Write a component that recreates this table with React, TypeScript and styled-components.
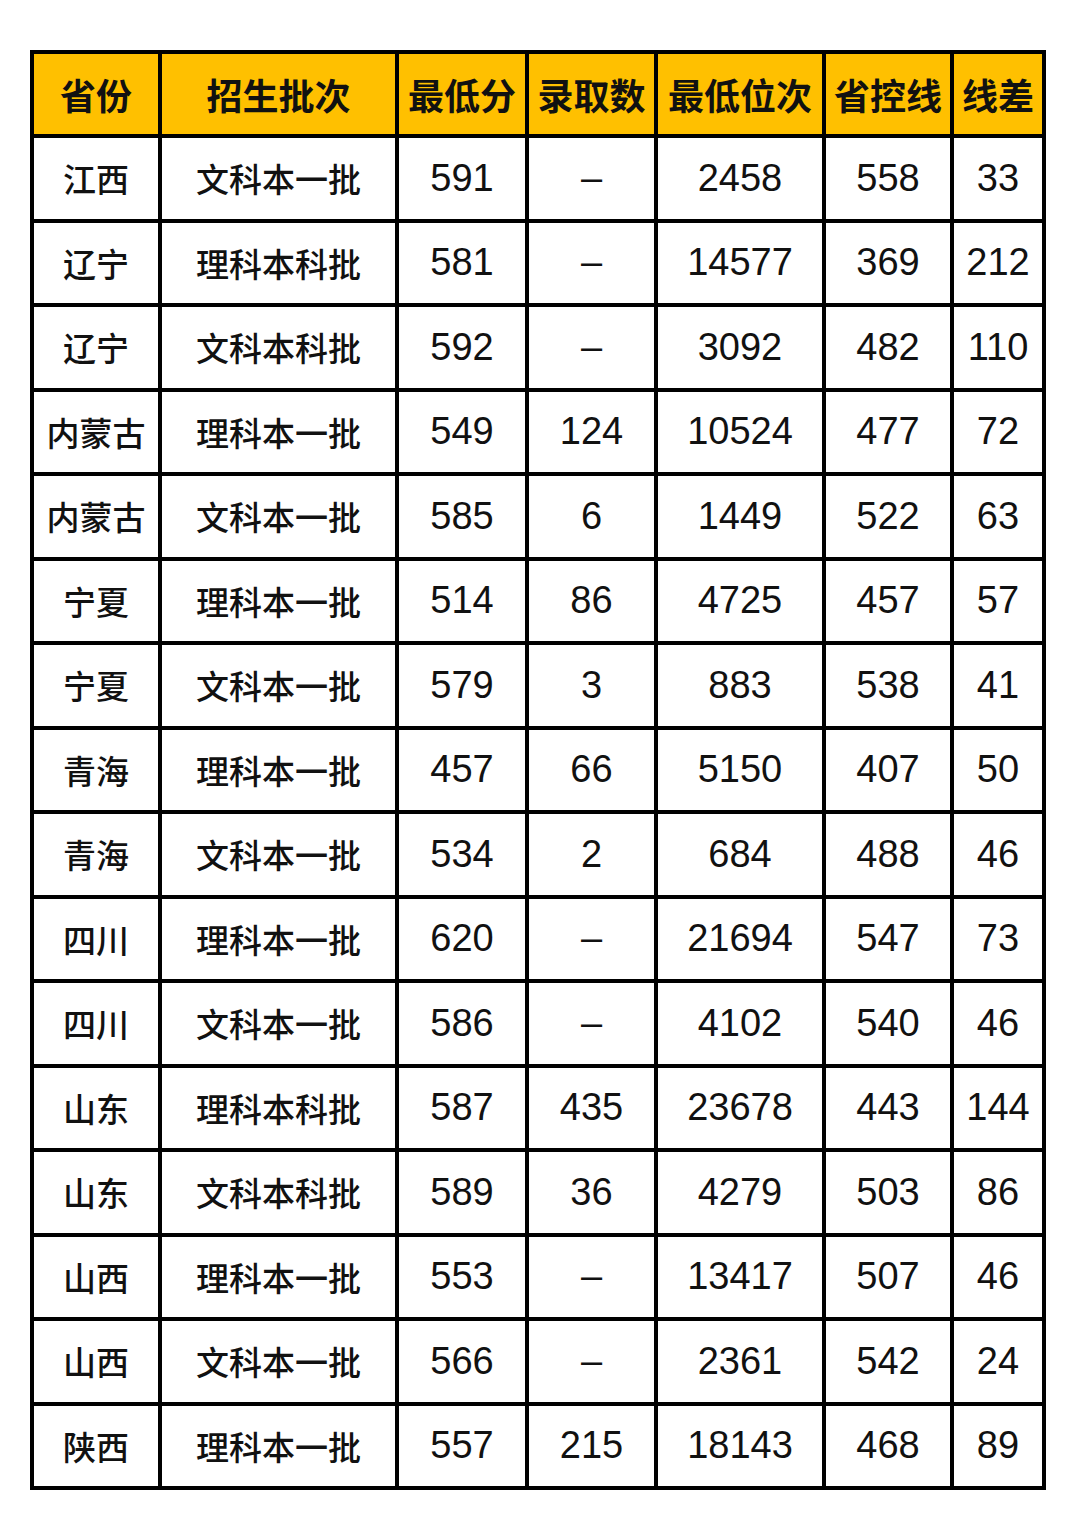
import React from 'react';
import styled, { createGlobalStyle } from 'styled-components';

const GlobalStyle = createGlobalStyle`
  html, body {
    margin: 0;
    padding: 0;
    background: #ffffff;
  }
`;

const columns = ['省份', '招生批次', '最低分', '录取数', '最低位次', '省控线', '线差'];

const rows: string[][] = [
  ['江西', '文科本一批', '591', '–', '2458', '558', '33'],
  ['辽宁', '理科本科批', '581', '–', '14577', '369', '212'],
  ['辽宁', '文科本科批', '592', '–', '3092', '482', '110'],
  ['内蒙古', '理科本一批', '549', '124', '10524', '477', '72'],
  ['内蒙古', '文科本一批', '585', '6', '1449', '522', '63'],
  ['宁夏', '理科本一批', '514', '86', '4725', '457', '57'],
  ['宁夏', '文科本一批', '579', '3', '883', '538', '41'],
  ['青海', '理科本一批', '457', '66', '5150', '407', '50'],
  ['青海', '文科本一批', '534', '2', '684', '488', '46'],
  ['四川', '理科本一批', '620', '–', '21694', '547', '73'],
  ['四川', '文科本一批', '586', '–', '4102', '540', '46'],
  ['山东', '理科本科批', '587', '435', '23678', '443', '144'],
  ['山东', '文科本科批', '589', '36', '4279', '503', '86'],
  ['山西', '理科本一批', '553', '–', '13417', '507', '46'],
  ['山西', '文科本一批', '566', '–', '2361', '542', '24'],
  ['陕西', '理科本一批', '557', '215', '18143', '468', '89'],
];

const Page = styled.div`
  padding: 50px 0 37px 30px;
`;

const Grid = styled.div`
  display: grid;
  grid-template-columns: 124px 233px 126px 125px 164px 124px 88px;
  grid-template-rows: 80px repeat(16, 80.5px);
  gap: 4px;
  padding: 4px;
  background: #000000;
  width: max-content;
`;

const HeadCell = styled.div`
  background: #ffc000;
  display: flex;
  align-items: center;
  justify-content: center;
  font-family: 'Noto Sans CJK SC', 'Noto Sans', sans-serif;
  font-weight: 700;
  font-size: 36px;
  color: #111111;
  white-space: nowrap;
`;

const Cell = styled.div<{ $num: boolean }>`
  background: #ffffff;
  display: flex;
  align-items: center;
  justify-content: center;
  white-space: nowrap;
  color: #111111;
  font-family: ${(p) =>
    p.$num ? "'Liberation Sans', Arial, sans-serif" : "'Noto Sans CJK SC', 'Noto Sans', sans-serif"};
  font-size: ${(p) => (p.$num ? '38px' : '33px')};
  font-weight: ${(p) => (p.$num ? 400 : 500)};
`;

const isNum = (s: string) => /^[0-9–]+$/.test(s);

const App: React.FC = () => (
  <Page>
    <GlobalStyle />
    <Grid>
      {columns.map((c) => (
        <HeadCell key={c}>{c}</HeadCell>
      ))}
      {rows.map((r, i) =>
        r.map((v, j) => (
          <Cell key={`${i}-${j}`} $num={isNum(v)}>
            {v}
          </Cell>
        ))
      )}
    </Grid>
  </Page>
);

export default App;
